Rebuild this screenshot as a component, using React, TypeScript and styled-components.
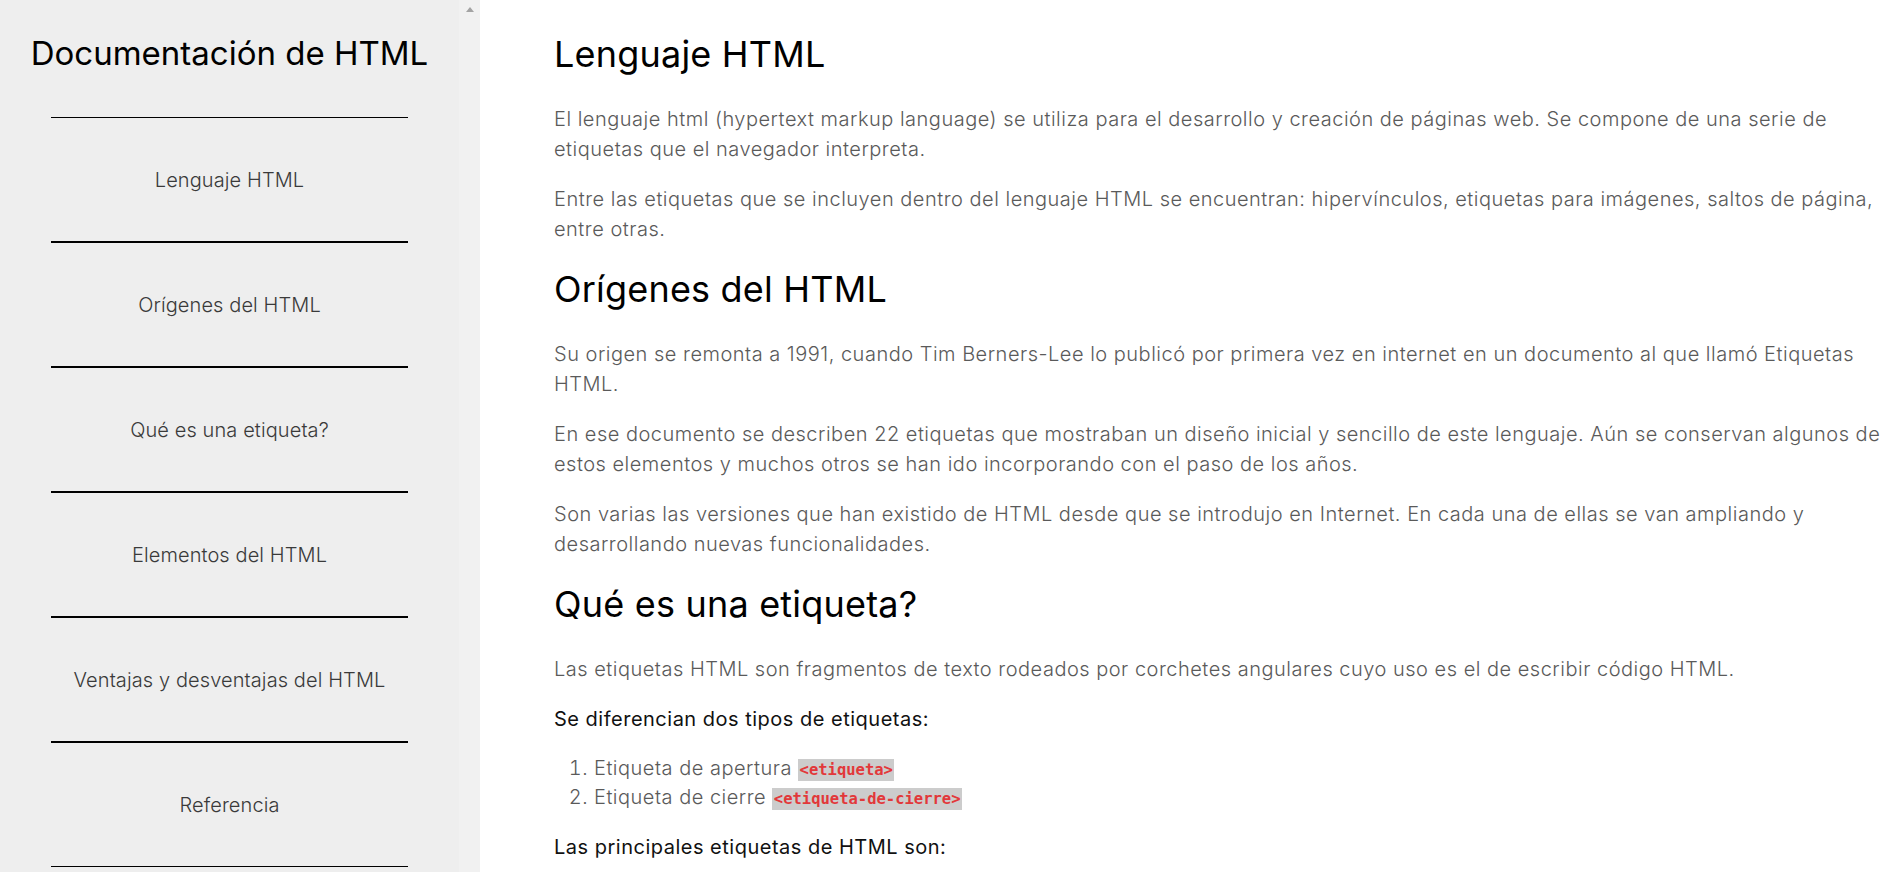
import React from "react";
import styled, { createGlobalStyle } from "styled-components";

const FONT = `"Inter", "Open Sans", sans-serif`;
const MONO = `"DejaVu Sans Mono", "Liberation Mono", monospace`;

const Global = createGlobalStyle`
  html, body {
    margin: 0;
    padding: 0;
    height: 100%;
    overflow: hidden;
    background: #ffffff;
  }
  #root { height: 100%; }
  * { box-sizing: border-box; }
`;

const Layout = styled.div`
  display: flex;
  height: 100vh;
  font-family: ${FONT};
`;

const Sidebar = styled.aside`
  width: 480px;
  flex: none;
  display: flex;
  background: #eeeeee;
  overflow: hidden;
`;

const SideContent = styled.nav`
  flex: 1;
  display: flex;
  flex-direction: column;
  align-items: center;
`;

const ScrollTrack = styled.div`
  width: 21px;
  flex: none;
  background: #f1f1f1;
  display: flex;
  justify-content: center;
  padding-top: 7px;
`;

const ScrollArrow = styled.span`
  width: 0;
  height: 0;
  border-left: 4.5px solid transparent;
  border-right: 4.5px solid transparent;
  border-bottom: 5px solid #a3a3a3;
`;

const SideTitle = styled.h1`
  margin: 33px 0 43px;
  font-size: 33px;
  font-weight: 400;
  line-height: 41px;
  color: #000;
  text-align: center;
  white-space: nowrap;
`;

const NavList = styled.ul`
  list-style: none;
  margin: 0;
  padding: 0;
  width: 357px;
`;

const NavLink = styled.a`
  display: flex;
  align-items: center;
  justify-content: center;
  height: 125px;
  border-top: 1px solid #000;
  border-bottom: 1px solid #000;
  color: #3a3a3a;
  font-size: 20px;
  font-weight: 300;
  letter-spacing: 0.1px;
  text-decoration: none;
`;

const Main = styled.main`
  flex: 1;
  min-width: 0;
  padding: 0 4px 0 74px;
  overflow: hidden;
`;

const Heading = styled.h2<{ $first?: boolean }>`
  margin: ${(p) => (p.$first ? "33px" : "24px")} 0 28px;
  font-size: 36px;
  font-weight: 400;
  line-height: 43px;
  letter-spacing: 0.2px;
  color: #000;
`;

const Para = styled.p<{ $strong?: boolean }>`
  margin: 20px 0;
  font-size: 20px;
  line-height: 30px;
  letter-spacing: 0.5px;
  font-weight: ${(p) => (p.$strong ? 400 : 300)};
  color: ${(p) => (p.$strong ? "#111" : "#5a5a5a")};
`;

const List = styled.ol`
  margin: 20px 0;
  padding-left: 40px;
  font-size: 20px;
  line-height: 29px;
  letter-spacing: 0.5px;
  font-weight: 300;
  color: #5a5a5a;
`;

const Code = styled.code`
  font-family: ${MONO};
  font-size: 15.5px;
  line-height: 1;
  font-weight: 700;
  letter-spacing: 0;
  color: #e2383a;
  background: #cccccc;
  padding: 2px 1.5px;
`;

const navItems = [
  "Lenguaje HTML",
  "Orígenes del HTML",
  "Qué es una etiqueta?",
  "Elementos del HTML",
  "Ventajas y desventajas del HTML",
  "Referencia",
];

export default function App() {
  return (
    <>
      <Global />
      <Layout>
        <Sidebar>
          <SideContent>
            <SideTitle>Documentación de HTML</SideTitle>
            <NavList>
              {navItems.map((item) => (
                <li key={item}>
                  <NavLink href="#">{item}</NavLink>
                </li>
              ))}
            </NavList>
          </SideContent>
          <ScrollTrack>
            <ScrollArrow />
          </ScrollTrack>
        </Sidebar>
        <Main>
          <Heading $first>Lenguaje HTML</Heading>
          <Para>
            El lenguaje html (hypertext markup language) se utiliza para el desarrollo y creación de páginas web. Se
            compone de una serie de etiquetas que el navegador interpreta.
          </Para>
          <Para>
            Entre las etiquetas que se incluyen dentro del lenguaje HTML se encuentran: hipervínculos, etiquetas para
            imágenes, saltos de página, entre otras.
          </Para>
          <Heading>Orígenes del HTML</Heading>
          <Para>
            Su origen se remonta a 1991, cuando Tim Berners-Lee lo publicó por primera vez en internet en un documento
            al que llamó Etiquetas HTML.
          </Para>
          <Para>
            En ese documento se describen 22 etiquetas que mostraban un diseño inicial y sencillo de este lenguaje. Aún
            se conservan algunos de estos elementos y muchos otros se han ido incorporando con el paso de los años.
          </Para>
          <Para>
            Son varias las versiones que han existido de HTML desde que se introdujo en Internet. En cada una de ellas
            se van ampliando y desarrollando nuevas funcionalidades.
          </Para>
          <Heading>Qué es una etiqueta?</Heading>
          <Para>
            Las etiquetas HTML son fragmentos de texto rodeados por corchetes angulares cuyo uso es el de escribir
            código HTML.
          </Para>
          <Para $strong>Se diferencian dos tipos de etiquetas:</Para>
          <List>
            <li>
              Etiqueta de apertura <Code>&lt;etiqueta&gt;</Code>
            </li>
            <li>
              Etiqueta de cierre <Code>&lt;etiqueta-de-cierre&gt;</Code>
            </li>
          </List>
          <Para $strong>Las principales etiquetas de HTML son:</Para>
        </Main>
      </Layout>
    </>
  );
}
